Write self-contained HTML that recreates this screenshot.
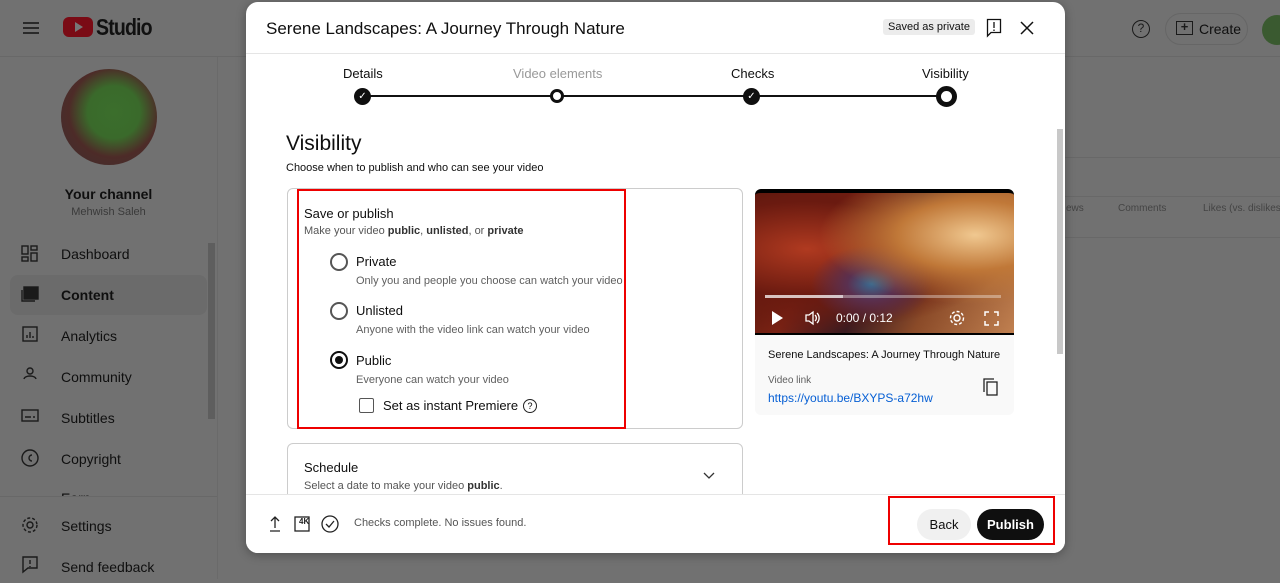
<!DOCTYPE html>
<html><head><meta charset="utf-8"><style>
*{box-sizing:border-box;margin:0;padding:0}
body{width:1280px;height:579px;overflow:hidden;background:#717171;font-family:"Liberation Sans",sans-serif;position:relative}
.a{position:absolute}
.t{white-space:nowrap}
.sb{color:#0f0f0f;font-size:14px}
</style></head><body>
<div class="a" style="left:0;top:0;width:1280px;height:57px;border-bottom:1px solid #686868"></div>
<div class="a" style="left:23px;top:22px;width:16px;height:2px;background:#2a2a2a;box-shadow:0 5px 0 #2a2a2a,0 10px 0 #2a2a2a"></div>
<div class="a" style="left:63px;top:17px;width:30px;height:20px;background:#7a0b15;border-radius:6px"></div>
<div class="a" style="left:75px;top:22px;width:0;height:0;border-left:8px solid #777;border-top:5px solid transparent;border-bottom:5px solid transparent"></div>
<div class="a t" style="left:96px;top:14px;font-size:23px;font-weight:bold;color:#111;letter-spacing:-1px;transform:scaleX(.85);transform-origin:left">Studio</div>
<div class="a" style="left:217px;top:57px;width:1px;height:522px;background:#6a6a6a"></div>
<div class="a" style="left:61px;top:69px;width:96px;height:96px;border-radius:50%;background:radial-gradient(circle at 55% 45%,#3b6e2c 0,#3a6a2b 35%,#4d2b28 60%,#3d3030 100%)"></div>
<div class="a t" style="left:0;width:217px;text-align:center;top:186px;font-size:14px;font-weight:bold;color:#0f0f0f">Your channel</div>
<div class="a t" style="left:0;width:217px;text-align:center;top:206px;font-size:11px;color:#3a3a3a">Mehwish Saleh</div>
<div class="a" style="left:10px;top:275px;width:197px;height:40px;background:#6b6b6b;border-radius:8px"></div>
<div class="a" style="left:208px;top:243px;width:7px;height:176px;background:#5e5e5e"></div>
<div class="a t sb" style="left:61px;top:246px">Dashboard</div>
<div class="a t sb" style="left:61px;top:287px;font-weight:bold">Content</div>
<div class="a t sb" style="left:61px;top:328px">Analytics</div>
<div class="a t sb" style="left:61px;top:369px">Community</div>
<div class="a t sb" style="left:61px;top:410px">Subtitles</div>
<div class="a t sb" style="left:61px;top:451px">Copyright</div>
<div class="a t sb" style="left:61px;top:490px;height:6px;overflow:hidden">Earn</div>
<div class="a" style="left:0;top:496px;width:217px;height:1px;background:#686868"></div>
<div class="a t sb" style="left:61px;top:518px">Settings</div>
<div class="a t sb" style="left:61px;top:559px">Send feedback</div>
<svg class="a" style="left:20px;top:243px" width="20" height="340" fill="none" stroke="#1a1a1a" stroke-width="1.4">
<rect x="2" y="3" width="6" height="8"/><rect x="11" y="3" width="6" height="4"/><rect x="2" y="14" width="6" height="4"/><rect x="11" y="10" width="6" height="8"/>
<rect x="4" y="44" width="14" height="12" fill="#1a1a1a"/><path d="M2 47v11h13"/>
<rect x="3" y="84" width="14" height="14"/><path d="M7 95v-3M10 95v-6M13 95v-2"/>
<circle cx="10" cy="128" r="3"/><path d="M4 136c1-4 11-4 12 0"/>
<rect x="2" y="167" width="16" height="11"/><path d="M5 174h6M13 174h2"/>
<circle cx="10" cy="215" r="8"/><path d="M12 212a3 3 0 1 0 0 6"/>
<circle cx="10" cy="282" r="3"/><circle cx="10" cy="282" r="7" stroke-dasharray="3 2"/>
<path d="M3 314h14v11H8l-5 4z"/><path d="M10 317v4M10 323v1"/>
</svg>
<div class="a" style="left:1132px;top:20px;width:18px;height:18px;border:1.5px solid #1a1a1a;border-radius:50%;font-size:12px;text-align:center;line-height:15px;color:#1a1a1a">?</div>
<div class="a" style="left:1165px;top:13px;width:83px;height:32px;border:1px solid #666;border-radius:16px"></div>
<div class="a" style="left:1176px;top:21px;width:17px;height:14px;border:1.5px solid #1a1a1a;font-size:13px;line-height:10px;text-align:center;font-weight:bold;color:#1a1a1a">+</div>
<div class="a t" style="left:1199px;top:21px;font-size:14px;color:#0f0f0f">Create</div>
<div class="a" style="left:1262px;top:15px;width:30px;height:30px;border-radius:50%;background:#3a5a30"></div>
<div class="a" style="left:1064px;top:157px;width:216px;height:1px;background:#686868"></div>
<div class="a" style="left:1064px;top:196px;width:216px;height:1px;background:#686868"></div>
<div class="a" style="left:1064px;top:237px;width:216px;height:1px;background:#686868"></div>
<div class="a t" style="left:1066px;top:203px;font-size:10px;color:#444">ews</div>
<div class="a t" style="left:1118px;top:203px;font-size:10px;color:#444">Comments</div>
<div class="a t" style="left:1203px;top:203px;font-size:10px;color:#444">Likes (vs. dislikes)</div>

<div class="a" style="left:246px;top:2px;width:819px;height:551px;background:#fff;border-radius:12px;overflow:hidden;box-shadow:0 2px 10px rgba(0,0,0,.3)">
 <div class="a t" style="left:20px;top:17px;font-size:17px;color:#0f0f0f">Serene Landscapes: A Journey Through Nature</div>
 <div class="a t" style="left:637px;top:17px;padding:2px 5px;background:#ececec;border-radius:3px;font-size:11px;color:#111">Saved as private</div>
 <svg class="a" style="left:740px;top:16px" width="16" height="20" fill="none" stroke="#111" stroke-width="1.3"><path d="M1.5 1.5h13v13H5l-3.5 3.5z"/><path d="M8 4v6M8 11.5v1.5"/></svg>
 <svg class="a" style="left:774px;top:19px" width="14" height="14" stroke="#111" stroke-width="1.5"><path d="M1 1l12 12M13 1L1 13"/></svg>
 <div class="a" style="left:0;top:51px;width:819px;height:1px;background:#e5e5e5"></div>
 <div class="a t" style="left:97px;top:64px;font-size:13px;color:#0f0f0f">Details</div>
 <div class="a t" style="left:267px;top:64px;font-size:13px;color:#999">Video elements</div>
 <div class="a t" style="left:485px;top:64px;font-size:13px;color:#0f0f0f">Checks</div>
 <div class="a t" style="left:676px;top:64px;font-size:13px;color:#0f0f0f">Visibility</div>
 <div class="a" style="left:117px;top:93px;width:584px;height:2px;background:#111"></div>
 <div class="a" style="left:108px;top:86px;width:17px;height:17px;border-radius:50%;background:#0f0f0f;color:#fff;font-size:10px;text-align:center;line-height:17px">✓</div>
 <div class="a" style="left:304px;top:87px;width:14px;height:14px;border-radius:50%;background:#fff;border:3px solid #0f0f0f"></div>
 <div class="a" style="left:497px;top:86px;width:17px;height:17px;border-radius:50%;background:#0f0f0f;color:#fff;font-size:10px;text-align:center;line-height:17px">✓</div>
 <div class="a" style="left:690px;top:84px;width:21px;height:21px;border-radius:50%;background:#fff;border:5px solid #0f0f0f"></div>
 <div class="a" style="left:811px;top:127px;width:6px;height:225px;background:#c8c8c8"></div>
 <div class="a t" style="left:40px;top:130px;font-size:21px;color:#0f0f0f">Visibility</div>
 <div class="a t" style="left:40px;top:160px;font-size:11px;color:#0f0f0f">Choose when to publish and who can see your video</div>
 <div class="a" style="left:41px;top:186px;width:456px;height:241px;border:1px solid #ccc;border-radius:6px"></div>
 <div class="a" style="left:51px;top:187px;width:329px;height:240px;border:2px solid #e00"></div>
 <div class="a t" style="left:58px;top:204px;font-size:13px;color:#0f0f0f">Save or publish</div>
 <div class="a t" style="left:58px;top:223px;font-size:11px;color:#555">Make your video <b style="color:#333">public</b>, <b style="color:#333">unlisted</b>, or <b style="color:#333">private</b></div>
 <div class="a" style="left:84px;top:251px;width:18px;height:18px;border:2px solid #555;border-radius:50%"></div>
 <div class="a t" style="left:110px;top:252px;font-size:13px;color:#0f0f0f">Private</div>
 <div class="a t" style="left:110px;top:273px;font-size:11px;color:#606060">Only you and people you choose can watch your video</div>
 <div class="a" style="left:84px;top:300px;width:18px;height:18px;border:2px solid #555;border-radius:50%"></div>
 <div class="a t" style="left:110px;top:301px;font-size:13px;color:#0f0f0f">Unlisted</div>
 <div class="a t" style="left:110px;top:322px;font-size:11px;color:#606060">Anyone with the video link can watch your video</div>
 <div class="a" style="left:84px;top:349px;width:18px;height:18px;border:2px solid #0f0f0f;border-radius:50%"><div style="margin:3px;width:8px;height:8px;border-radius:50%;background:#0f0f0f"></div></div>
 <div class="a t" style="left:110px;top:351px;font-size:13px;color:#0f0f0f">Public</div>
 <div class="a t" style="left:110px;top:372px;font-size:11px;color:#606060">Everyone can watch your video</div>
 <div class="a" style="left:113px;top:396px;width:15px;height:15px;border:1.5px solid #555;border-radius:2px"></div>
 <div class="a t" style="left:137px;top:396px;font-size:13px;color:#0f0f0f">Set as instant Premiere</div>
 <div class="a" style="left:277px;top:397px;width:14px;height:14px;border:1.3px solid #222;border-radius:50%;font-size:9px;text-align:center;line-height:12px">?</div>
 <div class="a" style="left:41px;top:441px;width:456px;height:80px;border:1px solid #ccc;border-radius:6px"></div>
 <div class="a t" style="left:58px;top:458px;font-size:13px;color:#0f0f0f">Schedule</div>
 <div class="a t" style="left:58px;top:478px;font-size:11px;color:#555">Select a date to make your video <b style="color:#333">public</b>.</div>
 <svg class="a" style="left:457px;top:470px" width="12" height="8" fill="none" stroke="#333" stroke-width="1.3"><path d="M1 1l5 5 5-5"/></svg>
 <div class="a" style="left:509px;top:187px;width:259px;height:146px;background:radial-gradient(ellipse at 85% 30%,#f0c890 0,#c07838 25%,transparent 50%),radial-gradient(ellipse at 45% 65%,#3a6a90 0,#5a3050 12%,transparent 30%),radial-gradient(ellipse at 20% 40%,#b03a20 0,#6a1a10 40%,transparent 70%),linear-gradient(120deg,#4a1408 0%,#7a2214 30%,#3a1a20 50%,#8a4a28 70%,#c08050 100%);border-radius:6px 6px 0 0;border-top:4px solid #000;border-bottom:2px solid #000"></div>
 <div class="a" style="left:519px;top:293px;width:236px;height:3px;background:rgba(255,255,255,.35)"></div>
 <div class="a" style="left:519px;top:293px;width:78px;height:3px;background:rgba(255,255,255,.6)"></div>
 <div class="a" style="left:526px;top:309px;width:0;height:0;border-left:11px solid #fff;border-top:7px solid transparent;border-bottom:7px solid transparent"></div>
 <svg class="a" style="left:558px;top:308px" width="18" height="16" fill="none" stroke="#fff" stroke-width="1.3"><path d="M2 5h3l4-3v12l-4-3H2z"/><path d="M11 5a4 4 0 0 1 0 6M13 3a7 7 0 0 1 0 10"/></svg>
 <div class="a t" style="left:590px;top:309px;font-size:12px;color:#fff">0:00 / 0:12</div>
 <svg class="a" style="left:702px;top:307px" width="18" height="18" fill="none" stroke="#fff" stroke-width="1.4"><circle cx="9" cy="9" r="3"/><circle cx="9" cy="9" r="6.5" stroke-dasharray="3 2"/></svg>
 <svg class="a" style="left:738px;top:309px" width="15" height="15" fill="none" stroke="#fff" stroke-width="1.5"><path d="M1 5V1h4M10 1h4v4M14 10v4h-4M5 14H1v-4"/></svg>
 <div class="a" style="left:509px;top:333px;width:259px;height:80px;background:#f9f9f9;border-radius:0 0 6px 6px"></div>
 <div class="a t" style="left:522px;top:347px;font-size:11px;color:#0f0f0f">Serene Landscapes: A Journey Through Nature</div>
 <div class="a t" style="left:522px;top:373px;font-size:10px;color:#606060">Video link</div>
 <div class="a t" style="left:522px;top:389px;font-size:12px;color:#065fd4">https://youtu.be/BXYPS-a72hw</div>
 <svg class="a" style="left:737px;top:376px" width="16" height="18" fill="none" stroke="#222" stroke-width="1.3"><path d="M1 14V1h10"/><rect x="4" y="4" width="10" height="13"/></svg>
 <div class="a" style="left:0;top:492px;width:819px;height:59px;background:#fff;border-top:1px solid #e5e5e5"></div>
 <svg class="a" style="left:22px;top:512px" width="80" height="20" fill="none" stroke="#222" stroke-width="1.3"><path d="M7 3v11M3 7l4-4 4 4M2 17h10"/><rect x="27" y="3" width="14" height="14"/><circle cx="62" cy="10" r="8"/><path d="M58 10l3 3 5-6"/></svg>
 <div class="a t" style="left:53px;top:515px;font-size:8px;font-weight:bold;color:#222">4K</div>
 <div class="a t" style="left:108px;top:515px;font-size:11px;color:#555">Checks complete. No issues found.</div>
 <div class="a" style="left:642px;top:494px;width:167px;height:49px;border:2px solid #e00"></div>
 <div class="a" style="left:671px;top:507px;width:54px;height:31px;background:#f0f0f0;border-radius:16px;font-size:13px;text-align:center;line-height:31px;color:#0f0f0f">Back</div>
 <div class="a" style="left:731px;top:507px;width:67px;height:31px;background:#0f0f0f;border-radius:16px;font-size:13px;font-weight:bold;text-align:center;line-height:31px;color:#fff">Publish</div>
</div>
</body></html>
